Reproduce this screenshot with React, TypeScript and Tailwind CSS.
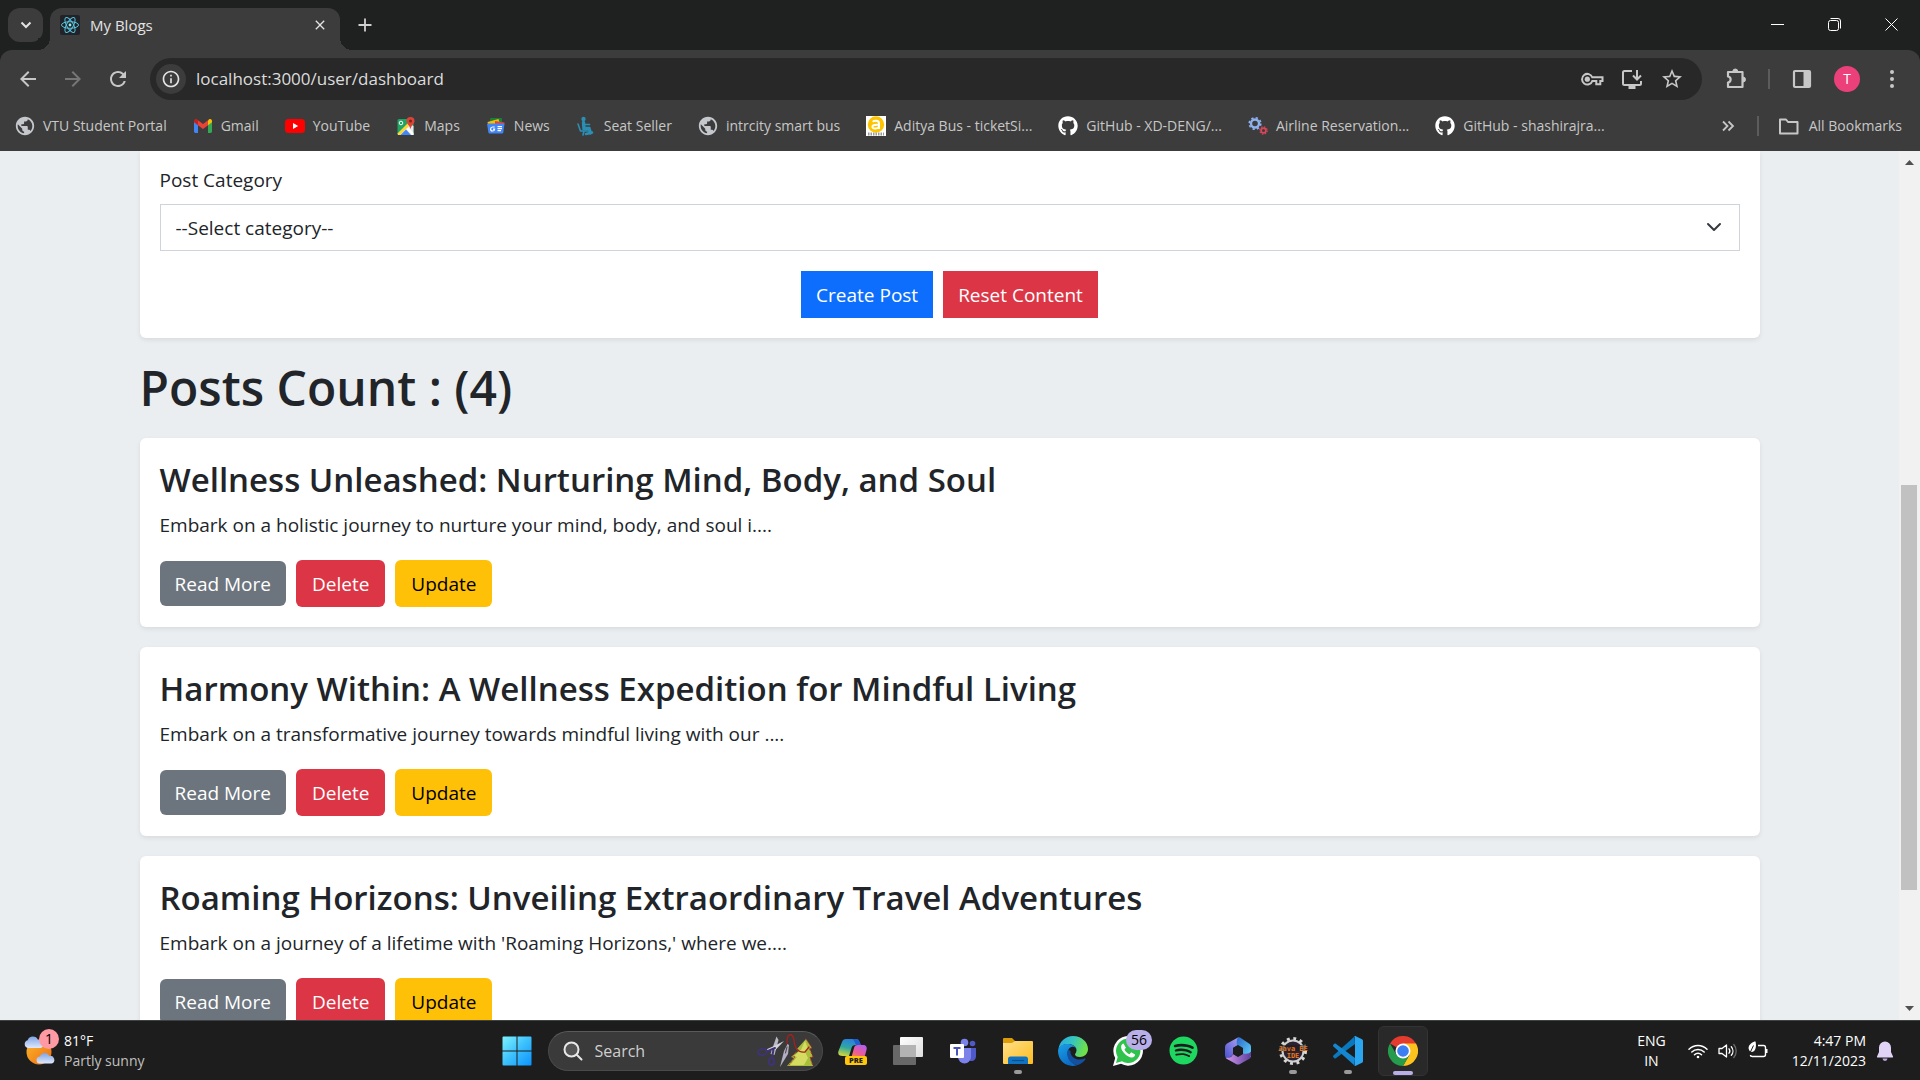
import React from "react";
import {
  MdArrowBack,
  MdArrowForward,
  MdClose,
  MdInfoOutline,
  MdPublic,
  MdRefresh,
  MdStarOutline,
} from "react-icons/md";
import { FaGithub, FaSpotify } from "react-icons/fa";

type IconProps = { className?: string };

/* ---------- Bookmark icons ---------- */

const ReactLogo = () => (
  <svg viewBox="0 0 20 20" className="size-5 shrink-0" fill="none" stroke="#58c4dc" strokeWidth="1">
    <rect width="20" height="20" rx="2" fill="#20232a" stroke="none" />
    <ellipse cx="10" cy="10" rx="8.5" ry="3.3" />
    <ellipse cx="10" cy="10" rx="8.5" ry="3.3" transform="rotate(60 10 10)" />
    <ellipse cx="10" cy="10" rx="8.5" ry="3.3" transform="rotate(120 10 10)" />
    <circle cx="10" cy="10" r="1.4" fill="#9be7f7" stroke="none" />
  </svg>
);

const Globe = () => <MdPublic className="size-[22px] shrink-0 -mx-px text-[#c4c7cc]" />;

const GmailLogo = () => (
  <svg viewBox="0 0 20 20" className="size-5 shrink-0">
    <path d="M1 5v10.6c0 .8.6 1.4 1.4 1.4H5V8.4z" fill="#4285f4" />
    <path d="M19 5v10.6c0 .8-.6 1.4-1.4 1.4H15V8.4z" fill="#34a853" />
    <path d="M15 4.4v4.9l4-3V4.9c0-1.7-1.9-2.5-3.1-1.5z" fill="#fbbc04" />
    <path d="M5 9.300V4.300l5 3.800 5-3.800v5l-5 3.800z" fill="#ea4335" />
    <path d="M1 4.900v1.400l4 3V4.300l-.9-.9C2.900 2.400 1 3.200 1 4.900z" fill="#c5221f" />
  </svg>
);

const YouTubeLogo = () => (
  <svg viewBox="0 0 20 20" className="size-5 shrink-0">
    <rect x="0" y="3" width="20" height="14" rx="3.500" fill="#f00" />
    <path d="M8 7l5.200 3L8 13z" fill="#fff" />
  </svg>
);

const MapsLogo = () => (
  <svg viewBox="0 0 20 20" className="size-5 shrink-0">
    <rect x="1.500" y="3" width="16" height="16" rx="1.500" fill="#1fa463" />
    <path d="M1.500 18L13 7l4.500 3v9H2.500z" fill="#e8eaed" />
    <path d="M1.500 17.500L14 5l2 2L4 19H3z" fill="#fdd835" />
    <path d="M4.500 19L10 13.500l5 5.500z" fill="#4285f4" />
    <path d="M10.500 13l5.500 6h1.500v-2l-5-5.500z" fill="#fff" />
    <circle cx="5" cy="7" r="1.800" fill="none" stroke="#fff" strokeWidth="1" />
    <path d="M14.500 1a4 4 0 0 0-4 4c0 3 3.200 4 4 8 .8-4 4-5 4-8a4 4 0 0 0-4-4z" fill="#db4437" />
    <circle cx="14.500" cy="5" r="1.500" fill="#7b231c" />
  </svg>
);

const NewsLogo = () => (
  <svg viewBox="0 0 20 20" className="size-5 shrink-0">
    <rect x="4" y="2" width="12" height="6" rx="1" fill="#188038" />
    <path d="M1.500 6l11-3 1.500 5-11 3z" fill="#fbbc04" />
    <path d="M9 5l9.500 1.500-1 6L9 11z" fill="#ea4335" />
    <path d="M1 7.500h17.500l-1.200 9c-.1.600-.5 1-1.100 1H3.500c-.6 0-1-.4-1.100-1z" fill="#4285f4" />
    <path d="M8.700 11H6.600a2 2 0 1 0 2 2.200H7M11.500 10.700h4.500M11.500 12.700h4.500M11.500 14.700h3.500" fill="none" stroke="#fff" strokeWidth="1.200" />
  </svg>
);

const SeatLogo = () => (
  <svg viewBox="0 0 20 20" className="size-5 shrink-0" fill="none" stroke="#2b8fb5" strokeLinecap="round">
    <circle cx="7.500" cy="3" r="2.200" fill="#2b8fb5" stroke="none" />
    <path d="M7.500 6.500l.5 6h5l1.500 4.500" strokeWidth="3.400" />
    <path d="M2 8l2.500 7h7M8 15l-1 4M8.500 8.500h5" strokeWidth="1.600" />
    <path d="M10 18l6-1.500" strokeWidth="2.600" />
  </svg>
);

const AdityaLogo = () => (
  <svg viewBox="0 0 20 20" className="size-5 shrink-0">
    <rect width="20" height="20" fill="#fff" />
    <circle cx="10" cy="8.500" r="8.200" fill="#fdc400" />
    <path d="M6.800 5.800c1-1.400 6.200-1.800 6.200 1.500V13M13 8.800c-6.500-.5-6.800 1-6.500 2.400.5 2 5.500 1.800 6.500-.6" fill="none" stroke="#fff" strokeWidth="2" />
    <path d="M2 18h16" stroke="#999" strokeWidth="3" strokeDasharray="1.500 1" />
  </svg>
);

const GitHubLogo = () => <FaGithub className="size-5 shrink-0 text-white" />;

const GearsLogo = () => (
  <svg viewBox="0 0 20 20" className="size-5 shrink-0" fill="none">
    <circle cx="7" cy="7.500" r="4" stroke="#8fb1ee" strokeWidth="2.400" />
    <circle cx="7" cy="7.500" r="5.800" stroke="#8fb1ee" strokeWidth="1.600" strokeDasharray="2.300 2.250" />
    <circle cx="15.500" cy="14.500" r="2.400" stroke="#d8465a" strokeWidth="1.700" />
    <circle cx="15.500" cy="14.500" r="3.700" stroke="#d8465a" strokeWidth="1.200" strokeDasharray="1.500 1.400" />
  </svg>
);

/* ---------- Browser icons ---------- */

const KeyIcon = () => (
  <svg viewBox="0 0 24 24" className="size-6" fill="none" stroke="#c7c7c7" strokeWidth="2">
    <path d="M12.300 10.300H22.500v3.800h-2.200v3.200h-4v-3.200h-4a5.300 5.300 0 1 1 0-3.800z" />
    <circle cx="7.300" cy="12.200" r="2.600" fill="#c7c7c7" stroke="none" />
  </svg>
);

const InstallIcon = () => (
  <svg viewBox="0 0 24 24" className="size-6" fill="none" stroke="#c7c7c7" strokeWidth="2">
    <path d="M12 4H4.500C3.500 4 3 4.500 3 5.500v11c0 1 .5 1.500 1.500 1.500h15c1 0 1.500-.5 1.500-1.500V14" />
    <path d="M8.500 20.300h7" strokeWidth="3.400" />
    <path d="M17 3v9M13 8.500l4 4 4-4" />
  </svg>
);

const PuzzleIcon = () => (
  <svg viewBox="0 0 24 24" className="size-6" fill="none" stroke="#c7c7c7" strokeWidth="2.200" strokeLinejoin="round">
    <path d="M4 5h14.500v15H4v-4.500c3.500-.5 3.500-5.500 0-6z" />
    <path d="M8.800 4.500a2.500 2.500 0 0 1 5 0zM19 10a2.500 2.500 0 0 1 0 5z" fill="#c7c7c7" strokeWidth="1" />
  </svg>
);

const SidePanelIcon = () => (
  <svg viewBox="0 0 24 24" className="size-6">
    <rect x="4" y="4" width="16" height="16" rx="1" fill="none" stroke="#c7c7c7" strokeWidth="2.200" />
    <path d="M13.500 4H20v16h-6.500z" fill="#c7c7c7" />
  </svg>
);

const FolderIcon = () => (
  <svg viewBox="0 0 24 24" className="size-6" fill="none" stroke="#c7c7c7" strokeWidth="2">
    <path d="M3 5.500h6l2 2.500h9.500v11.500H3z" strokeLinejoin="round" />
  </svg>
);

/* ---------- Taskbar icons ---------- */

const WindowsLogo = () => (
  <svg viewBox="0 0 30 30" className="size-[30px]">
    <defs>
      <linearGradient id="win" x1="0" y1="0" x2="1" y2="1">
        <stop offset="0" stopColor="#7df3ff" />
        <stop offset="0.500" stopColor="#3cc0fc" />
        <stop offset="1" stopColor="#0a94ff" />
      </linearGradient>
    </defs>
    <path d="M1.500.5H14.500v14H.5v-13a1 1 0 0 1 1-1zM15.500 .5h13a1 1 0 0 1 1 1v13h-14zM.5 15.500h14v14H1.500a1 1 0 0 1-1-1zM15.500 15.500h14v13a1 1 0 0 1-1 1h-13z" fill="url(#win)" />
  </svg>
);

const SearchArt = () => (
  <svg viewBox="0 0 58 36" className="h-9 w-[58px] shrink-0" fill="none" strokeLinecap="round">
    <path d="M20.500 3.500l2 3.500-4 15-4-1z" fill="#b9bac6" />
    <path d="M28 8L18 18.500l-9-1.500 9-4z" fill="#d3d3dc" />
    <path d="M19 15l-7 3M17.500 17l-1.500 7" stroke="#3e3473" strokeWidth="2" />
    <ellipse cx="6.500" cy="19" rx="4.500" ry="3" stroke="#3e3473" strokeWidth="2" transform="rotate(-12 6.500 19)" />
    <ellipse cx="15.500" cy="28.500" rx="2.600" ry="3.600" stroke="#3e3473" strokeWidth="2" />
    <path d="M50 6l6 9-2.500.5 3.500 8.500-3 .5 3 8.500H31l7-8-3-1 7.500-6-2-1.500z" fill="#a9bf3c" />
    <path d="M49 8l3 8-3 3 3 6-4 7H34l7-8-3-1 7-6z" fill="#d6dc62" />
    <path d="M50 6l6 9-2.500.5 3.500 8.500-3 .5 3 8.500M42 17l-6 6 3 1-6 8" stroke="#b3312e" strokeWidth="1" strokeDasharray="1.500 2" />
    <path d="M31 11c-1-11 6-12 7-4 .5 8 4 13 11 12l4-5" stroke="#a5201f" strokeWidth="1.300" />
    <path d="M31.500 11l1.500 1-1 9-8 13 4-16z" fill="#b4aec2" />
    <path d="M31 14l-1.500 6" stroke="#444" />
  </svg>
);

const CopilotLogo = () => (
  <svg viewBox="0 0 30 30" className="size-[30px]">
    <defs>
      <linearGradient id="cpA" x1="0.500" y1="0" x2="0.200" y2="1">
        <stop offset="0" stopColor="#2a7fe0" />
        <stop offset="0.500" stopColor="#2fa8a0" />
        <stop offset="1" stopColor="#d8d83a" />
      </linearGradient>
      <linearGradient id="cpB" x1="0.800" y1="0" x2="0.200" y2="1">
        <stop offset="0" stopColor="#b65cf0" />
        <stop offset="0.600" stopColor="#ee5d8f" />
        <stop offset="1" stopColor="#f7923a" />
      </linearGradient>
    </defs>
    <path d="M8 3h10c2 0 3 1 3.500 3L23 9h-5c-3 0-4 1-4.500 3L11 20H5c-4 0-5.500-2-4.500-5l3.500-9c.7-2 2-3 4-3z" fill="url(#cpA)" />
    <path d="M14 3h4c2 0 3 1 3.500 3L23 9h-5l-1-2c-.5-2-1.500-3.500-3-4z" fill="#1c5fd0" />
    <path d="M19.500 9H25c3 0 4.300 2 3.500 5L26 23H13l3-11c.5-2 1.500-3 3.500-3z" fill="url(#cpB)" />
    <rect x="7" y="20" width="22" height="9" rx="2" fill="#ffc60a" />
    <text x="18" y="27.300" textAnchor="middle" fontSize="7.500" fontWeight="800" fontFamily="Open Sans, sans-serif" fill="#222">PRE</text>
  </svg>
);

const TaskViewIcon = () => (
  <svg viewBox="0 0 30 30" className="size-[30px]">
    <defs>
      <linearGradient id="tv" x1="0" y1="0" x2="1" y2="1">
        <stop offset="0" stopColor="#fff" />
        <stop offset="1" stopColor="#dedede" />
      </linearGradient>
    </defs>
    <rect x="7" y="1" width="23" height="20" rx="1" fill="url(#tv)" />
    <rect x="0" y="9" width="23" height="20" rx="1" fill="#686868" />
    <rect x="7" y="9" width="16" height="12" fill="#b3b3b3" />
  </svg>
);

const TeamsLogo = () => (
  <svg viewBox="0 0 30 30" className="size-[30px]">
    <circle cx="24.500" cy="7.500" r="2.800" fill="#5059c9" />
    <path d="M21 12h7v8c0 3-2 5-4.500 5-1.500 0-2.500-.5-2.500-1z" fill="#5059c9" />
    <circle cx="16.500" cy="6.500" r="3.800" fill="#7b83eb" />
    <path d="M10 12h13v9a6.500 6.500 0 0 1-13 0z" fill="#7b83eb" />
    <rect x="2" y="8" width="14" height="14" rx="1" fill="#fff" />
    <path d="M5.500 12h7M9 12v7.500" stroke="#4b53bc" strokeWidth="2" />
  </svg>
);

const ExplorerLogo = () => (
  <svg viewBox="0 0 30 30" className="size-[30px]">
    <defs>
      <linearGradient id="ex" x1="0" y1="0" x2="1" y2="1">
        <stop offset="0" stopColor="#ffe08a" />
        <stop offset="1" stopColor="#fcbc1e" />
      </linearGradient>
    </defs>
    <path d="M0 3a1 1 0 0 1 1-1h8l3 3v5H0z" fill="#dc9b0a" />
    <path d="M0 7h9l3-2h17a1 1 0 0 1 1 1v21a1 1 0 0 1-1 1H1a1 1 0 0 1-1-1z" fill="url(#ex)" />
    <path d="M5 28v-5a2.500 2.500 0 0 1 2.500-2.500h15A2.500 2.500 0 0 1 25 23v5z" fill="#0f73c4" />
    <path d="M9 24.500h12" stroke="#0a4f8c" strokeWidth="1.200" />
  </svg>
);

const EdgeLogo = () => (
  <svg viewBox="0 0 30 30" className="size-[30px]">
    <defs>
      <linearGradient id="edA" x1="0" y1="0" x2="1" y2="0.300">
        <stop offset="0" stopColor="#2aa8e8" />
        <stop offset="0.500" stopColor="#35c4c0" />
        <stop offset="1" stopColor="#6ee04a" />
      </linearGradient>
      <linearGradient id="edB" x1="0" y1="0" x2="0.500" y2="1">
        <stop offset="0" stopColor="#1ba0e8" />
        <stop offset="1" stopColor="#0c6bc4" />
      </linearGradient>
    </defs>
    <path d="M.5 13C1.500 5.500 7.500 0 15 0c8.500 0 15 6 15 13 0 5-4 8-8 8-3.500 0-5-1.500-5-2.500s1.500-1.800 1.500-4.500c0-3.500-4-6-8.500-6C6 8 2 10 .5 13z" fill="url(#edA)" />
    <path d="M0 15C0 10.500 4.500 8 9.500 8c4.500 0 9 2.500 9 6 0-2-2-3.500-4-3.200C10 11.500 9 16 10 20c1 4.500 5 8 9 9.300C9 32 0 25 0 15z" fill="url(#edB)" />
    <path d="M10 13.500c-2 5-.5 13 9 15.800 4-1 7-3.500 8.500-6 .3-.6-.2-1-.8-.7C20 25.500 12 22 12.500 15z" fill="#1350a0" />
  </svg>
);

const WhatsAppLogo = () => (
  <svg viewBox="0 0 30 30" className="size-[30px]">
    <path d="M0 30l2.200-8A14.800 14.800 0 1 1 8 27.800z" fill="#fff" />
    <path d="M3 27l1.700-6A12.200 12.200 0 1 1 9 25.300z" fill="#2fc24d" />
    <path d="M10.500 7.500c-.8 0-2.700 1.500-2.400 4 .4 3.500 5.400 9.300 10 9.900 2.500.3 4.200-1.500 4-3l-3.900-2.100-1.700 1.900c-2.200-.8-4.200-2.700-5-4.700l1.400-1.700z" fill="#fff" />
  </svg>
);

const M365Logo = () => (
  <svg viewBox="0 0 30 30" className="size-[30px]">
    <defs>
      <linearGradient id="mA" x1="0" y1="1" x2="1" y2="0">
        <stop offset="0" stopColor="#4a4fd0" />
        <stop offset="1" stopColor="#b4a8f4" />
      </linearGradient>
      <linearGradient id="mB" x1="0" y1="0" x2="1" y2="1">
        <stop offset="0" stopColor="#2a66cc" />
        <stop offset="1" stopColor="#62d6fa" />
      </linearGradient>
      <linearGradient id="mC" x1="0" y1="0" x2="1" y2="0">
        <stop offset="0" stopColor="#d79af0" />
        <stop offset="1" stopColor="#5c3f9c" />
      </linearGradient>
    </defs>
    <path d="M15 1.500L4 7.500Q2 8.600 2 11v8q0 3 2.500 3 3 0 5.500-4v-6l5-3 3-4z" fill="url(#mA)" />
    <path d="M15 1.200q-2 3-1 8l6 3v5.500l8 3.500V10.500q0-2-2-3L17 1.600q-1-.6-2-.4z" fill="url(#mB)" />
    <path d="M2.500 21.500q.5 1 2 1.800l8.500 4.700q2 1 4 0l9-5q2-1.200 2-3.500V15.500q-2 3-8 2l-5 3-5-2.500q-2 5-7.500 3.500z" fill="url(#mC)" />
    <path d="M15 9l5 3v6l-5 3-5-3v-6z" fill="#1d1d1d" />
  </svg>
);

const JavaEELogo = () => (
  <svg viewBox="0 0 30 30" className="size-[30px]">
    <circle cx="15" cy="15" r="12.500" fill="none" stroke="#d9d9d9" strokeWidth="3" strokeDasharray="2.900 3.640" />
    <circle cx="15" cy="15" r="10.500" fill="#2a2233" stroke="#cfcfcf" strokeWidth="2" />
    <rect x="1" y="9" width="28" height="6" fill="#1d1d1d" fillOpacity="0.600" />
    <text x="15" y="14.500" textAnchor="middle" fontSize="7" fontWeight="700" fontFamily="DejaVu Sans Mono, monospace" fill="#e8751a">Java EE</text>
    <text x="15" y="21.500" textAnchor="middle" fontSize="7" fontWeight="700" fontFamily="DejaVu Sans Mono, monospace" fill="#e8751a">IDE</text>
  </svg>
);

const VSCodeLogo = () => (
  <svg viewBox="0 0 30 30" className="size-[30px]">
    <path d="M22 8L2.800 22.200c-.5.300-1 .3-1.400 0l-1-1c-.5-.5-.5-1.200 0-1.700L21.500.5z" fill="#0a78be" />
    <path d="M22 22L2.800 7.800c-.5-.3-1-.3-1.400 0l-1 1c-.5.500-.5 1.200 0 1.700L21.500 29.500z" fill="#1487d0" />
    <path d="M21.500 29.800c.4.200.9.200 1.300 0l6.200-3c.6-.3 1-.9 1-1.600V4.800c0-.7-.4-1.300-1-1.600l-6.200-3c-.6-.3-1.300-.2-1.800.3.400-.2 1 .1 1 .7v27.600c0 .6-.6.9-1 .7z" fill="#2aa5ef" />
  </svg>
);

const ChromeLogo = () => (
  <svg viewBox="0 0 30 30" className="size-[30px]">
    <path d="M15 15L2 7.500A15 15 0 0 1 28 7.500z" fill="#e33b2e" />
    <path d="M15 7.500h13A15 15 0 0 1 15 30l6.500-11.200z" fill="#fcc31e" />
    <path d="M8.500 18.800L2 7.500A15 15 0 0 0 15 30l6.500-11.200L15 22z" fill="#259c4c" />
    <circle cx="15" cy="15" r="7.500" fill="#fff" />
    <circle cx="15" cy="15" r="5.800" fill="#3b7ff0" />
  </svg>
);

const WeatherIcon = () => (
  <svg viewBox="0 0 32 32" className="size-8">
    <defs>
      <linearGradient id="sun" x1="0" y1="0" x2="1" y2="1">
        <stop offset="0" stopColor="#fbb82c" />
        <stop offset="1" stopColor="#ee6c10" />
      </linearGradient>
      <linearGradient id="cloud" x1="0" y1="0" x2="0" y2="1">
        <stop offset="0" stopColor="#7fa4e6" />
        <stop offset="1" stopColor="#dfe8fa" />
      </linearGradient>
    </defs>
    <circle cx="15" cy="17" r="12.500" fill="url(#sun)" />
    <path d="M4 13a4 4 0 0 1-.3-7.800A5.500 5.500 0 0 1 14 5a4 4 0 0 1 3 8z" fill="url(#cloud)" />
    <path d="M16 28.500a3.500 3.500 0 0 1 0-7 5 5 0 0 1 9.300-.5 3.800 3.800 0 0 1 2.200 7.500z" fill="url(#cloud)" />
  </svg>
);

const WifiIcon = () => (
  <svg viewBox="0 0 20 20" className="size-5" fill="none" stroke="#fff" strokeWidth="1.500" strokeLinecap="round">
    <path d="M1 8.300c5-5 13-5 18 0M3.800 11c3.500-3.400 8.900-3.400 12.400 0M6.500 13.700c2-2 5-2 7 0" />
    <circle cx="10" cy="16" r="1.300" fill="#fff" stroke="none" />
  </svg>
);

const SpeakerIcon = () => (
  <svg viewBox="0 0 20 20" className="size-5" fill="none" stroke="#fff" strokeWidth="1.300" strokeLinecap="round" strokeLinejoin="round">
    <path d="M1 7.500h3L8.500 4v12L4 12.500H1z" />
    <path d="M11 7.800a3.500 3.500 0 0 1 0 4.400M13.300 5.700a6.500 6.500 0 0 1 0 8.600" />
    <path d="M15.800 3.500a10 10 0 0 1 0 13" stroke="#6b6b6b" />
  </svg>
);

const BatteryIcon = () => (
  <svg viewBox="0 0 20 20" className="size-5" fill="none" stroke="#fff" strokeWidth="1.400">
    <path d="M10 4.500h5.500a2 2 0 0 1 2 2v7a2 2 0 0 1-2 2h-11c-1 0-2-.5-2-1.500" />
    <path d="M18.500 8v4" strokeWidth="2" />
    <path d="M.5 7C1 3 5 .5 7.500.5c1 4 .5 10-3.500 10.500-1.500 0-3-1-3.500-4z" fill="#fff" stroke="none" />
    <path d="M5.500 4.500L1 14" stroke="#1d1d1d" strokeWidth="1" />
  </svg>
);

const BellIcon = () => (
  <svg viewBox="0 0 18 20" className="h-5 w-[18px]" fill="#e0d3f5">
    <path d="M9 .5a6 6 0 0 0-6 6V11l-2 4.500c-.2.600.1 1 .7 1h14.600c.6 0 .9-.4.7-1L15 11V6.500a6 6 0 0 0-6-6z" />
    <path d="M6.500 17.500h5a2.500 2.500 0 0 1-5 0z" fill="#b9a5e0" />
  </svg>
);

/* ---------- Browser chrome ---------- */

const bookmarks: { label: string; icon: React.FC<IconProps> }[] = [
  { label: "VTU Student Portal", icon: Globe },
  { label: "Gmail", icon: GmailLogo },
  { label: "YouTube", icon: YouTubeLogo },
  { label: "Maps", icon: MapsLogo },
  { label: "News", icon: NewsLogo },
  { label: "Seat Seller", icon: SeatLogo },
  { label: "intrcity smart bus", icon: Globe },
  { label: "Aditya Bus - ticketSi...", icon: AdityaLogo },
  { label: "GitHub - XD-DENG/...", icon: GitHubLogo },
  { label: "Airline Reservation...", icon: GearsLogo },
  { label: "GitHub - shashirajra...", icon: GitHubLogo },
];

function TabStrip() {
  return (
    <div className="flex h-[50px] items-start justify-between">
      <div className="flex">
        <button aria-label="Search tabs" className="mt-2 ml-2 flex h-[34px] w-[35px] items-center justify-center rounded-xl bg-[#3c3c3c]">
          <svg viewBox="0 0 12 12" className="size-3" fill="none" stroke="#e3e3e3" strokeWidth="2">
            <path d="M1.500 3.500L6 8l4.500-4.500" />
          </svg>
        </button>
        <div className="relative mt-2 ml-[7px] flex h-[42px] w-[290px] items-center rounded-t-xl bg-[#3c3c3c] pr-2 pb-2 pl-2.5">
          <span className="absolute bottom-0 -left-3 size-3 bg-[radial-gradient(circle_at_0_0,#1f2120_12px,#3c3c3c_12px)]" />
          <span className="absolute -right-3 bottom-0 size-3 bg-[radial-gradient(circle_at_100%_0,#1f2120_12px,#3c3c3c_12px)]" />
          <ReactLogo />
          <span className="ml-2.5 flex-1 text-[15px] text-[#e3e3e3]">My Blogs</span>
          <button aria-label="Close tab" className="p-1">
            <MdClose className="size-4 text-[#e3e3e3]" />
          </button>
        </div>
        <button aria-label="New tab" className="mt-[17px] ml-[17px] size-4">
          <svg viewBox="0 0 16 16" className="size-4" stroke="#d0d0d0" strokeWidth="1.800">
            <path d="M8 1.500v13M1.500 8h13" />
          </svg>
        </button>
      </div>
      <div className="mt-[17px] mr-[21px] flex gap-[42px]">
        <button aria-label="Minimize">
          <svg viewBox="0 0 15 15" className="size-[15px]" stroke="#fff"><path d="M1 7.500h13" /></svg>
        </button>
        <button aria-label="Restore">
          <svg viewBox="0 0 15 15" className="size-[15px]" fill="none" stroke="#fff">
            <rect x="1.500" y="3.500" width="10" height="10" rx="2" />
            <path d="M3.500 1.500H11a2.500 2.500 0 0 1 2.500 2.500v7.500" />
          </svg>
        </button>
        <button aria-label="Close">
          <svg viewBox="0 0 15 15" className="size-[15px]" stroke="#fff"><path d="M1.500 1.500l12 12M13.500 1.500l-12 12" /></svg>
        </button>
      </div>
    </div>
  );
}

function Toolbar() {
  return (
    <div className="flex h-[58px] items-center rounded-t-xl bg-[#3c3c3c] pr-4 pl-4">
      <div className="flex gap-[21px] text-2xl text-[#c7c7c7]">
        <button aria-label="Back"><MdArrowBack /></button>
        <button aria-label="Forward" className="text-[#767676]"><MdArrowForward /></button>
        <button aria-label="Reload"><MdRefresh /></button>
      </div>
      <div className="ml-5 flex h-[42px] flex-1 items-center rounded-full bg-[#282828] pr-[18px] pl-1.5">
        <button aria-label="Site information" className="flex size-[30px] items-center justify-center rounded-full bg-[#3c3c3c]">
          <MdInfoOutline className="size-5 text-[#e3e3e3]" />
        </button>
        <input
          aria-label="Address"
          defaultValue="localhost:3000/user/dashboard"
          className="ml-2.5 flex-1 bg-transparent text-[17px] text-[#dcdcdc] outline-none"
        />
        <div className="flex items-center gap-4">
          <button aria-label="Passwords"><KeyIcon /></button>
          <button aria-label="Install app"><InstallIcon /></button>
          <button aria-label="Bookmark this page"><MdStarOutline className="size-6 text-[#c7c7c7]" /></button>
        </div>
      </div>
      <button aria-label="Extensions" className="ml-[22px]"><PuzzleIcon /></button>
      <span className="ml-5 h-5 w-0.5 bg-[#5c5c5c]" />
      <button aria-label="Side panel" className="ml-5"><SidePanelIcon /></button>
      <button aria-label="Profile" className="ml-5 flex size-[26px] items-center justify-center rounded-full bg-[#ec407a] text-sm text-white">T</button>
      <button aria-label="Menu" className="ml-5">
        <svg viewBox="0 0 24 24" className="size-6" fill="#c7c7c7">
          <circle cx="12" cy="5" r="2" /><circle cx="12" cy="12" r="2" /><circle cx="12" cy="19" r="2" />
        </svg>
      </button>
    </div>
  );
}

function BookmarksBar() {
  return (
    <nav className="flex h-[43px] items-center bg-[#3c3c3c] pr-[18px] pb-[7px] pl-[15px] text-sm whitespace-nowrap text-[#c7c7c7]">
      <div className="flex flex-1 items-center gap-[26px]">
        {bookmarks.map(({ label, icon: Icon }) => (
          <a key={label} href="#" className="flex items-center gap-2">
            <Icon />
            {label}
          </a>
        ))}
      </div>
      <button aria-label="More bookmarks">
        <svg viewBox="0 0 14 14" className="size-3.5" fill="none" stroke="#c7c7c7" strokeWidth="1.800">
          <path d="M2 2.500L6.500 7 2 11.500M7.500 2.500L12 7l-4.500 4.500" />
        </svg>
      </button>
      <span className="ml-[22px] h-5 w-0.5 bg-[#5c5c5c]" />
      <button className="ml-[18px] flex items-center gap-2">
        <FolderIcon />
        All Bookmarks
      </button>
    </nav>
  );
}

/* ---------- Page ---------- */

const posts = [
  {
    title: "Wellness Unleashed: Nurturing Mind, Body, and Soul",
    text: "Embark on a holistic journey to nurture your mind, body, and soul i....",
  },
  {
    title: "Harmony Within: A Wellness Expedition for Mindful Living",
    text: "Embark on a transformative journey towards mindful living with our ....",
  },
  {
    title: "Roaming Horizons: Unveiling Extraordinary Travel Adventures",
    text: "Embark on a journey of a lifetime with 'Roaming Horizons,' where we....",
  },
];

function PostCard({ title, text }: { title: string; text: string }) {
  return (
    <article className="mb-5 rounded-md bg-white p-5 shadow-[0_2px_5px_rgba(0,0,0,0.08)]">
      <h3 className="mb-2 text-[33px] leading-[44px] font-semibold">{title}</h3>
      <p className="mb-5 leading-[30px]">{text}</p>
      <div className="flex items-center gap-2.5">
        <a href="#" className="rounded-md bg-[#6c757d] px-[15px] pt-2 pb-1.5 leading-[31px] text-white">Read More</a>
        <button className="rounded-md bg-[#dc3545] px-4 pt-[9px] pb-[7px] leading-[31px] text-white">Delete</button>
        <button className="rounded-md bg-[#ffc107] px-4 pt-[9px] pb-[7px] leading-[31px] text-black">Update</button>
      </div>
    </article>
  );
}

function Scrollbar() {
  return (
    <div className="flex w-[21px] shrink-0 flex-col items-center bg-[#f1f1f1] text-[#505050]">
      <svg viewBox="0 0 21 21" className="size-[21px]" fill="#505050"><path d="M6 14h9l-4.500-5z" /></svg>
      <div className="flex w-full flex-1 flex-col items-center pr-px">
        <div className="grow-[313]" />
        <div className="w-4 grow-[405] bg-[#c1c1c1]" />
        <div className="grow-[109]" />
      </div>
      <svg viewBox="0 0 21 21" className="size-[21px]" fill="#505050"><path d="M6 7h9l-4.500 5z" /></svg>
    </div>
  );
}

function Page() {
  return (
    <div className="flex min-h-0 flex-1 bg-[#eaeef1] text-[#212529]">
      <main className="min-h-0 flex-1 overflow-hidden text-[19px]">
        <div className="mx-auto w-full max-w-[1620px]">
          <form className="rounded-b-md bg-white px-5 pt-3.5 pb-5 shadow-[0_2px_5px_rgba(0,0,0,0.08)]">
            <label htmlFor="category" className="block leading-[30px]">Post Category</label>
            <div className="relative mt-[9px]">
              <select id="category" className="block h-[47px] w-full appearance-none border border-[#ced4da] bg-white px-[15px] pt-0.5">
                <option>--Select category--</option>
              </select>
              <svg viewBox="0 0 16 16" className="pointer-events-none absolute top-[15px] right-[18px] size-4" fill="none" stroke="#343a40" strokeWidth="2" strokeLinecap="round" strokeLinejoin="round">
                <path d="M2 5l6 6 6-6" />
              </svg>
            </div>
            <div className="mt-5 flex justify-center gap-2.5">
              <button type="button" className="bg-[#0d6efd] px-[15px] pt-[9px] pb-[7px] leading-[31px] text-white">Create Post</button>
              <button type="button" className="bg-[#dc3545] px-[15px] pt-[9px] pb-[7px] leading-[31px] text-white">Reset Content</button>
            </div>
          </form>
          <h1 className="my-5 text-5xl leading-[60px] font-semibold">Posts Count : (4)</h1>
          {posts.map((post) => (
            <PostCard key={post.title} {...post} />
          ))}
        </div>
      </main>
      <Scrollbar />
    </div>
  );
}

/* ---------- Taskbar ---------- */

const apps: { name: string; icon: React.ReactNode; running?: boolean; active?: boolean; badge?: string }[] = [
  { name: "Copilot", icon: <CopilotLogo /> },
  { name: "Task view", icon: <TaskViewIcon /> },
  { name: "Teams", icon: <TeamsLogo /> },
  { name: "File Explorer", icon: <ExplorerLogo />, running: true },
  { name: "Edge", icon: <EdgeLogo /> },
  { name: "WhatsApp", icon: <WhatsAppLogo />, badge: "56" },
  { name: "Spotify", icon: <FaSpotify className="size-[29px] text-[#1ed760]" /> },
  { name: "Microsoft 365", icon: <M365Logo /> },
  { name: "Eclipse", icon: <JavaEELogo />, running: true },
  { name: "VS Code", icon: <VSCodeLogo />, running: true },
  { name: "Chrome", icon: <ChromeLogo />, active: true },
];

function Taskbar() {
  return (
    <footer className="grid h-[60px] grid-cols-[1fr_auto_1fr] items-center border-t border-[#3f4242] bg-[#1d1d1d] text-sm text-white">
      <div className="flex items-center pl-6">
        <div className="relative">
          <WeatherIcon />
          <span className="absolute -top-1.5 left-[15px] flex size-5 items-center justify-center rounded-full bg-[#ff99a4] text-black">1</span>
        </div>
        <div className="ml-2 leading-5">
          <div>81°F</div>
          <div className="text-[#c0c0c0]">Partly sunny</div>
        </div>
      </div>
      <div className="flex items-center">
        <button aria-label="Start" className="flex w-[55px] justify-center"><WindowsLogo /></button>
        <label className="mx-[3px] flex h-10 w-[275px] items-center rounded-full border border-[#4a4a4a] border-t-[#5a5a5a] bg-[#3a3a3a] pr-2 pl-3.5">
          <svg viewBox="0 0 20 20" className="size-5 shrink-0" fill="none" stroke="#e8e8e8" strokeWidth="2" strokeLinecap="round">
            <circle cx="8.500" cy="8.500" r="7" fill="#555" />
            <path d="M14 14l4.500 4.500" />
          </svg>
          <input aria-label="Search" placeholder="Search" className="ml-3 w-full min-w-0 flex-1 bg-transparent text-base placeholder:text-[#cfcfcf]" />
          <SearchArt />
        </label>
        {apps.map((app) => (
          <div key={app.name} className="flex w-[55px] justify-center">
            <button
              aria-label={app.name}
              className={
                app.active
                  ? "relative flex size-[50px] items-center justify-center rounded-md border border-[#333] bg-[#292929]"
                  : "relative flex size-[50px] items-center justify-center"
              }
            >
              {app.icon}
              {app.running && <span className="absolute bottom-0.5 h-1 w-2 rounded-full bg-[#9a9a9a]" />}
              {app.active && <span className="absolute bottom-0 h-1 w-5 rounded-full bg-[#b8aee8]" />}
              {app.badge && (
                <span className="absolute top-1 left-[23px] flex h-5 w-[26px] items-center justify-center rounded-full bg-[#b8aee8] text-sm text-black">
                  {app.badge}
                </span>
              )}
            </button>
          </div>
        ))}
      </div>
      <div className="flex items-center justify-end pr-[26px]">
        <div className="mr-[22px] text-center leading-5">
          <div>ENG</div>
          <div>IN</div>
        </div>
        <div className="mr-6 flex items-center gap-2.5">
          <WifiIcon />
          <SpeakerIcon />
          <BatteryIcon />
        </div>
        <div className="mr-2.5 text-right leading-5">
          <div>4:47 PM</div>
          <div>12/11/2023</div>
        </div>
        <BellIcon />
      </div>
    </footer>
  );
}

export default function App() {
  return (
    <div className="flex h-screen flex-col overflow-hidden bg-[#1f2120] font-['Open_Sans',sans-serif]">
      <header className="shrink-0">
        <TabStrip />
        <Toolbar />
        <BookmarksBar />
      </header>
      <Page />
      <Taskbar />
    </div>
  );
}
